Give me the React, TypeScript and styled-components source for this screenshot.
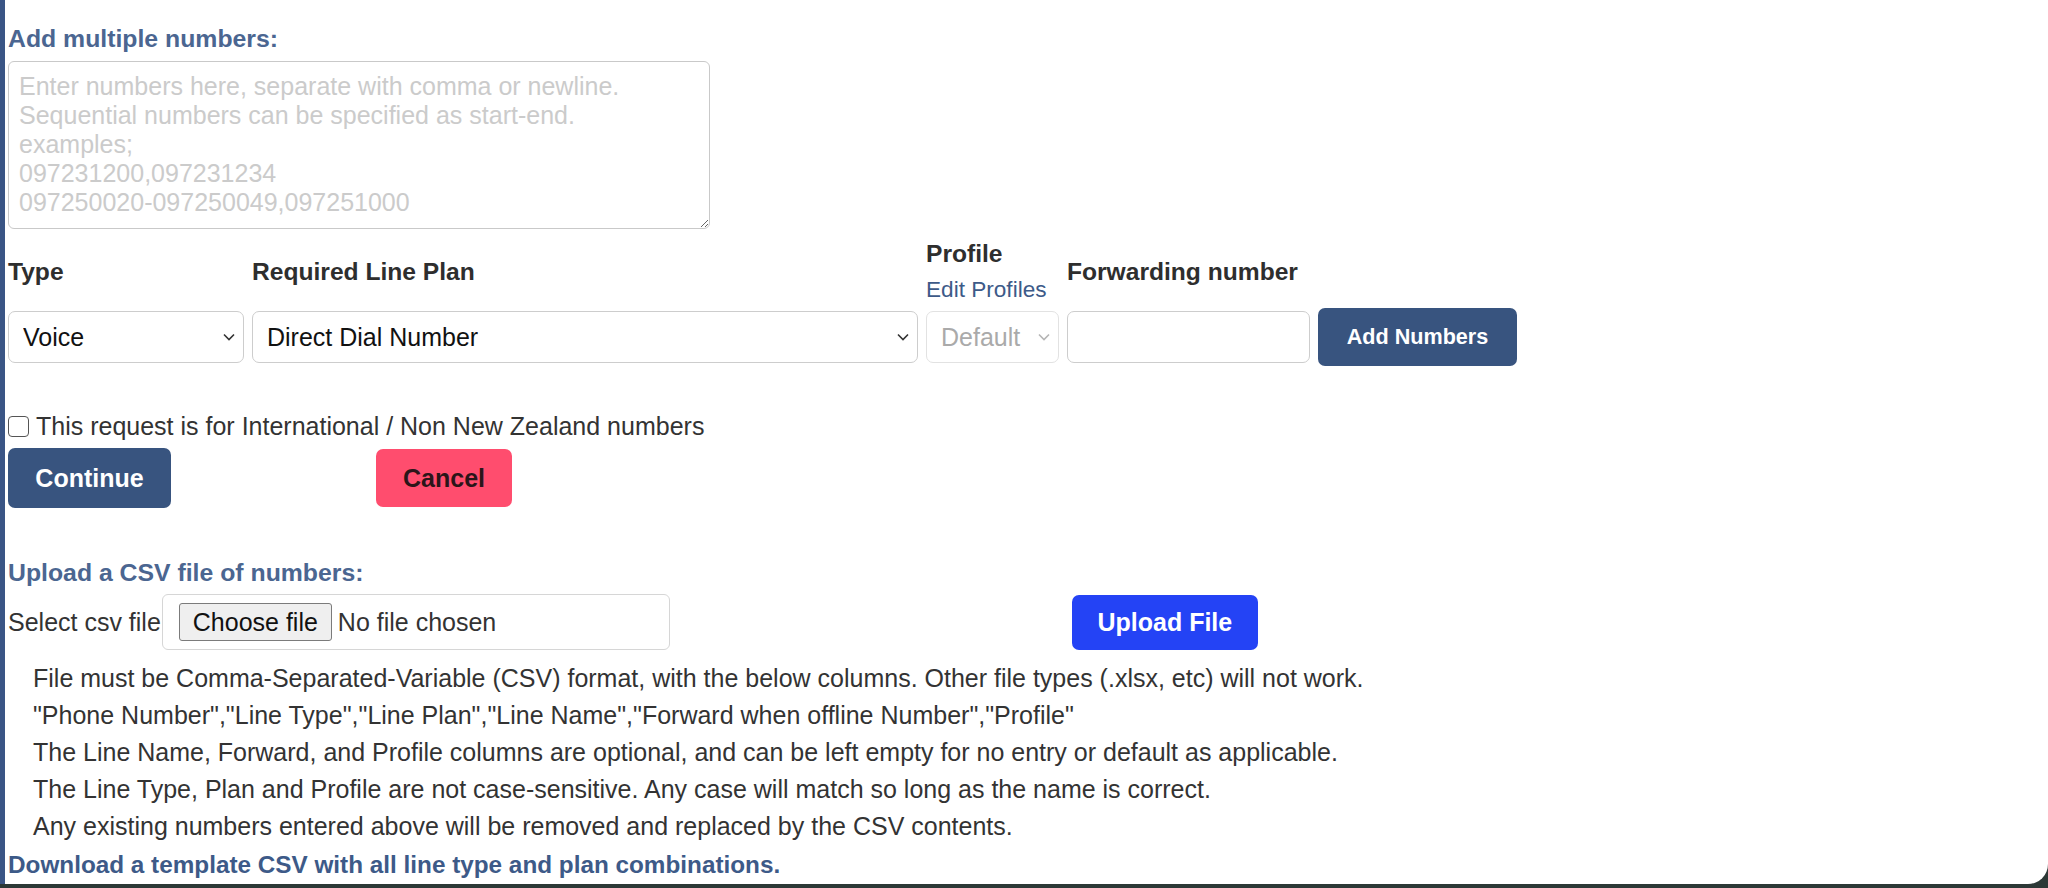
import styled, { createGlobalStyle } from 'styled-components';

const GlobalStyle = createGlobalStyle`
  html, body {
    margin: 0;
    padding: 0;
    background: #2c3836;
  }
  body {
    font-family: "Liberation Sans", Arial, sans-serif;
    color: #333;
  }
`;

// ----------------------------------------------------------------------

const Frame = styled.div`
  display: flex;
  width: 2048px;
  height: 888px;
  overflow: hidden;
  background: #2c3836;
`;

const SideStrip = styled.div`
  width: 5px;
  height: 884px;
  background: #3a5585;
`;

const Panel = styled.main`
  flex: 1;
  height: 884px;
  box-sizing: border-box;
  padding: 24px 0 0 3px;
  background: #fff;
  border-bottom-right-radius: 20px;
`;

const SectionTitle = styled.h3`
  margin: 0;
  font-size: 24.8px;
  line-height: 30px;
  font-weight: 700;
  color: #4b6691;
`;

const NumbersArea = styled.textarea`
  display: block;
  box-sizing: border-box;
  width: 702px;
  height: 168px;
  margin-top: 7px;
  padding: 10px 10px;
  border: 1px solid #c9c9c9;
  border-radius: 6px;
  font-family: inherit;
  font-size: 25px;
  line-height: 29px;
  color: #333;
  resize: vertical;

  &::placeholder {
    color: #cbcbcb;
  }
`;

const FormGrid = styled.div`
  display: grid;
  grid-template-columns: 236px 666px 133px 243px auto;
  grid-template-rows: 72px 58px;
  column-gap: 8px;
  align-items: center;
  justify-items: start;
  margin-top: 7px;
`;

const FieldLabel = styled.div`
  display: flex;
  flex-direction: column;
  justify-content: center;
  font-size: 24.6px;
  line-height: 30px;
  font-weight: 700;
  color: #2e2e2e;
`;

const LabelLink = styled.a`
  margin-top: 6px;
  font-size: 22.6px;
  line-height: 30px;
  font-weight: 400;
  color: #3d5a88;
  text-decoration: none;
`;

const SelectWrap = styled.div<{ width: number }>`
  position: relative;
  width: ${({ width }) => width}px;
`;

const Select = styled.select<{ muted?: boolean }>`
  appearance: none;
  display: block;
  box-sizing: border-box;
  width: 100%;
  height: 52px;
  padding: 0 30px 0 14px;
  border: 1px solid ${({ muted }) => (muted ? '#e2e2e2' : '#cdcdcd')};
  border-radius: 7px;
  background: #fff;
  font-family: inherit;
  font-size: 25px;
  color: ${({ muted }) => (muted ? '#aaa' : '#111')};
  opacity: 1;
`;

const Chevron = styled.svg<{ muted?: boolean }>`
  position: absolute;
  right: 9px;
  top: 22px;
  width: 12px;
  height: 8px;
  pointer-events: none;
  stroke: ${({ muted }) => (muted ? '#b5b5b5' : '#333')};
`;

const TextInput = styled.input`
  box-sizing: border-box;
  width: 243px;
  height: 52px;
  padding: 0 10px;
  border: 1px solid #cdcdcd;
  border-radius: 7px;
  font-family: inherit;
  font-size: 25px;
`;

const Button = styled.button<{ variant: 'navy' | 'pink' | 'blue'; w: number; h: number; small?: boolean }>`
  box-sizing: border-box;
  width: ${({ w }) => w}px;
  height: ${({ h }) => h}px;
  padding: 0;
  border: none;
  border-radius: 7px;
  font-family: inherit;
  font-size: ${({ small }) => (small ? 21.6 : 25)}px;
  font-weight: 700;
  cursor: pointer;
  background: ${({ variant }) =>
    variant === 'navy' ? '#38547f' : variant === 'pink' ? '#ff4d6e' : '#2443f5'};
  color: ${({ variant }) => (variant === 'pink' ? '#2b1519' : '#fff')};
`;

const CheckRow = styled.label`
  display: flex;
  align-items: center;
  gap: 7px;
  margin-top: 45px;
  font-size: 25px;
  line-height: 30px;
  color: #333;
`;

const CheckBox = styled.input`
  appearance: none;
  box-sizing: border-box;
  width: 21px;
  height: 21px;
  margin: 0;
  border: 1.5px solid #555;
  border-radius: 4px;
  background: #fff;
`;

const ActionRow = styled.div`
  display: flex;
  align-items: center;
  gap: 205px;
  margin-top: 7px;
`;

const UploadTitle = styled(SectionTitle)`
  margin-top: 50px;
`;

const FileRow = styled.div`
  display: flex;
  align-items: center;
  margin-top: 6px;
  font-size: 25px;
  color: #333;
`;

const FileBox = styled.div`
  display: flex;
  align-items: center;
  gap: 6px;
  box-sizing: border-box;
  width: 508px;
  height: 56px;
  margin-left: 1px;
  padding: 0 16px;
  border: 1px solid #d6d6d6;
  border-radius: 6px;
`;

const ChooseButton = styled.span`
  display: inline-flex;
  align-items: center;
  justify-content: center;
  box-sizing: border-box;
  width: 153px;
  height: 38px;
  border: 1px solid #7b7b7b;
  border-radius: 3px;
  background: #efefef;
  color: #111;
`;

const UploadSpacer = styled.div`
  width: 402px;
`;

const InfoList = styled.div`
  margin-top: 10px;
  padding-left: 25px;
  font-size: 25px;
  line-height: 37px;
  color: #333;
`;

const DownloadLink = styled.a`
  display: block;
  margin-top: 5px;
  font-size: 24.3px;
  line-height: 30px;
  font-weight: 700;
  color: #3d5a88;
  text-decoration: none;
`;

// ----------------------------------------------------------------------

function ChevronIcon({ muted }: { muted?: boolean }) {
  return (
    <Chevron muted={muted} viewBox="0 0 12 8" fill="none" strokeWidth="1.6">
      <path d="M1 1.5 6 6.5 11 1.5" />
    </Chevron>
  );
}

const INFO = [
  'File must be Comma-Separated-Variable (CSV) format, with the below columns. Other file types (.xlsx, etc) will not work.',
  '"Phone Number","Line Type","Line Plan","Line Name","Forward when offline Number","Profile"',
  'The Line Name, Forward, and Profile columns are optional, and can be left empty for no entry or default as applicable.',
  'The Line Type, Plan and Profile are not case-sensitive. Any case will match so long as the name is correct.',
  'Any existing numbers entered above will be removed and replaced by the CSV contents.',
];

export default function App() {
  return (
    <>
      <GlobalStyle />
      <Frame>
        <SideStrip />
        <Panel>
          <SectionTitle>Add multiple numbers:</SectionTitle>
          <NumbersArea
            placeholder={
              'Enter numbers here, separate with comma or newline.\nSequential numbers can be specified as start-end.\nexamples;\n097231200,097231234\n097250020-097250049,097251000'
            }
          />

          <FormGrid>
            <FieldLabel>Type</FieldLabel>
            <FieldLabel>Required Line Plan</FieldLabel>
            <FieldLabel>
              Profile
              <LabelLink href="#">Edit Profiles</LabelLink>
            </FieldLabel>
            <FieldLabel>Forwarding number</FieldLabel>
            <div />

            <SelectWrap width={236}>
              <Select defaultValue="Voice">
                <option>Voice</option>
              </Select>
              <ChevronIcon />
            </SelectWrap>
            <SelectWrap width={666}>
              <Select defaultValue="Direct Dial Number">
                <option>Direct Dial Number</option>
              </Select>
              <ChevronIcon />
            </SelectWrap>
            <SelectWrap width={133}>
              <Select muted disabled defaultValue="Default">
                <option>Default</option>
              </Select>
              <ChevronIcon muted />
            </SelectWrap>
            <TextInput type="text" />
            <Button variant="navy" w={199} h={58} small>
              Add Numbers
            </Button>
          </FormGrid>

          <CheckRow>
            <CheckBox type="checkbox" />
            This request is for International / Non New Zealand numbers
          </CheckRow>

          <ActionRow>
            <Button variant="navy" w={163} h={60}>
              Continue
            </Button>
            <Button variant="pink" w={136} h={58}>
              Cancel
            </Button>
          </ActionRow>

          <UploadTitle>Upload a CSV file of numbers:</UploadTitle>
          <FileRow>
            Select csv file
            <FileBox>
              <ChooseButton>Choose file</ChooseButton>
              No file chosen
            </FileBox>
            <UploadSpacer />
            <Button variant="blue" w={186} h={55}>
              Upload File
            </Button>
          </FileRow>

          <InfoList>
            {INFO.map((line) => (
              <div key={line}>{line}</div>
            ))}
          </InfoList>
          <DownloadLink href="#">Download a template CSV with all line type and plan combinations.</DownloadLink>
        </Panel>
      </Frame>
    </>
  );
}
